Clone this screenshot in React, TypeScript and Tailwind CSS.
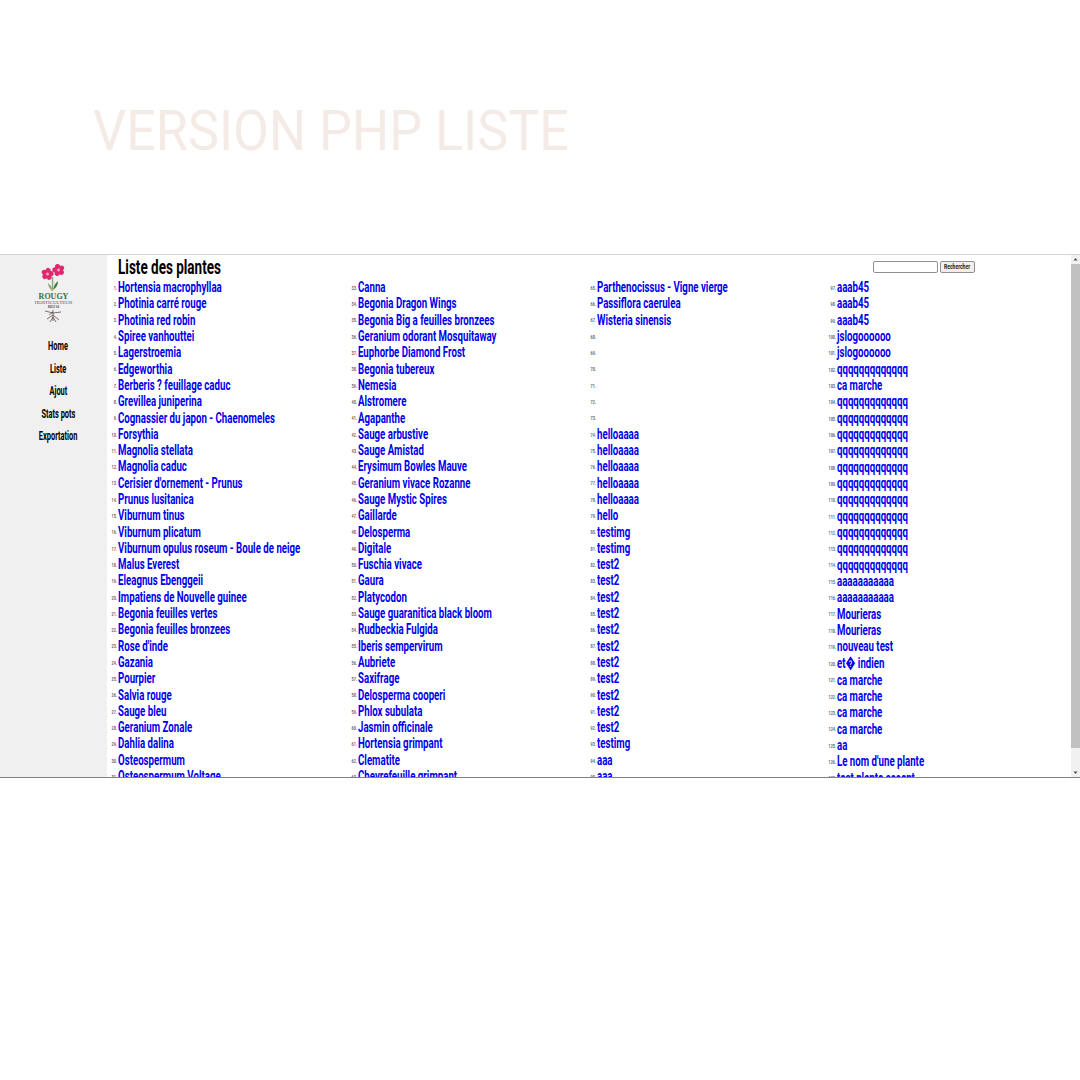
const c1 = ["Hortensia macrophyllaa","Photinia carré rouge","Photinia red robin","Spiree vanhouttei","Lagerstroemia","Edgeworthia","Berberis ? feuillage caduc","Grevillea juniperina","Cognassier du japon - Chaenomeles","Forsythia","Magnolia stellata","Magnolia caduc","Cerisier d'ornement - Prunus","Prunus lusitanica","Viburnum tinus","Viburnum plicatum","Viburnum opulus roseum - Boule de neige","Malus Everest","Eleagnus Ebenggeii","Impatiens de Nouvelle guinee","Begonia feuilles vertes","Begonia feuilles bronzees","Rose d'inde","Gazania","Pourpier","Salvia rouge","Sauge bleu","Geranium Zonale","Dahlia dalina","Osteospermum","Osteospermum Voltage"];
const c2 = ["Canna","Begonia Dragon Wings","Begonia Big a feuilles bronzees","Geranium odorant Mosquitaway","Euphorbe Diamond Frost","Begonia tubereux","Nemesia","Alstromere","Agapanthe","Sauge arbustive","Sauge Amistad","Erysimum Bowles Mauve","Geranium vivace Rozanne","Sauge Mystic Spires","Gaillarde","Delosperma","Digitale","Fuschia vivace","Gaura","Platycodon","Sauge guaranitica black bloom","Rudbeckia Fulgida","Iberis sempervirum","Aubriete","Saxifrage","Delosperma cooperi","Phlox subulata","Jasmin officinale","Hortensia grimpant","Clematite","Chevrefeuille grimpant"];
const c3 = ["Parthenocissus - Vigne vierge","Passiflora caerulea","Wisteria sinensis","","","","","","","helloaaaa","helloaaaa","helloaaaa","helloaaaa","helloaaaa","hello","testimg","testimg","test2","test2","test2","test2","test2","test2","test2","test2","test2","test2","test2","testimg","aaa","aaa"];
const q = "qqqqqqqqqqqqq";
const c4 = ["aaab45","aaab45","aaab45","jslogoooooo","jslogoooooo",q,"ca marche",q,q,q,q,q,q,q,q,q,q,q,"aaaaaaaaaaa","aaaaaaaaaaa","Mourieras","Mourieras","nouveau test","et\uFFFD indien","ca marche","ca marche","ca marche","ca marche","aa","Le nom d'une plante","test plante accent"];
const cols: [string[], number, string][] = [[c1,1,"h-[16.3px]"],[c2,33,"h-[16.3px]"],[c3,65,"h-[16.3px]"],[c4,97,"h-[16.33px]"]];
const nav = ["Home","Liste","Ajout","Stats pots","Exportation"];

function Flower({ x, y, r }: { x: number; y: number; r: number }) {
  return (
    <g transform={`translate(${x} ${y}) rotate(${r})`}>
      {[0, 72, 144, 216, 288].map((a) => (
        <ellipse key={a} cx="0" cy="-3.2" rx="2.6" ry="3" fill="#e2266f" transform={`rotate(${a})`} />
      ))}
      <circle r="1.5" fill="#f7a3b8" />
    </g>
  );
}

function Logo() {
  return (
    <svg width="44" height="60" viewBox="0 0 44 60" className="block">
      <path d="M20.5 14 Q21 21 20 28" stroke="#8aa878" strokeWidth="1.4" fill="none" />
      <path d="M21 27 Q22 21 26 18 Q26 24 21 27 Z" fill="#3f7d3a" />
      <path d="M19.5 27 Q16 24 16 20 Q19 22 20 26 Z" fill="#8aa878" />
      <Flower x={15.5} y={11} r={10} />
      <Flower x={26.5} y={7} r={-15} />
      <text x="21.5" y="36" textAnchor="middle" fontFamily="Liberation Serif, serif" fontWeight="700" fontSize="8" fill="#3d6b35">ROUGY</text>
      <text x="21.5" y="41" textAnchor="middle" fontFamily="Liberation Serif, serif" fontSize="5" fill="#555">HORTICULTEUR</text>
      <text x="21.5" y="45" textAnchor="middle" fontFamily="Liberation Serif, serif" fontWeight="700" fontSize="3" fill="#444">RIEZ 04</text>
      <path d="M21 47 V58 M21 50 L13 48 M21 50 L29 49 M21 52 L15 56 M21 52 L27 57 M21 49 L17 52 M21 54 L18 59 M21 54 L24 59" stroke="#4a3a30" strokeWidth="0.7" fill="none" />
    </svg>
  );
}

export default function App() {
  return (
    <div className="w-[1080px] h-[1080px] bg-white overflow-hidden antialiased font-['Roboto',sans-serif]">
      <div className="h-[254px] pl-[93px] pt-[99px]">
        <h1 className="text-[55px] leading-[64px] font-normal text-[#f4ebe6] whitespace-nowrap inline-block origin-left scale-x-[0.948]">VERSION PHP LISTE</h1>
      </div>
      <div className="flex h-[524px] border-t border-t-[#d4d4d4] border-b border-b-[#808080]">
        <aside className="w-[107px] shrink-0 bg-[#f0f0f0] flex flex-col items-center">
          <div className="w-[107px] pt-[8px] flex justify-center"><Logo /></div>
          <nav className="flex flex-col items-center gap-[6.5px] pt-[15px] pl-[9px]">
            {nav.map((n) => <a key={n} className="block h-[16px] leading-[16px] text-[12px] font-bold text-black whitespace-nowrap scale-x-[0.62]">{n}</a>)}
          </nav>
        </aside>
        <main className="flex-1 min-w-0 overflow-hidden">
          <div className="flex items-center justify-between h-[24px] pl-[11px] pr-[96px]">
            <h2 className="text-[20px] leading-[24px] font-bold text-black whitespace-nowrap origin-left scale-x-[0.675]">Liste des plantes</h2>
            <form className="flex items-center gap-[2px]">
              <input className="w-[65px] h-[12px] bg-white border border-[#8f8f8f] rounded-[2px]" />
              <button type="button" className="w-[35px] h-[12px] bg-[#efefef] border border-[#8f8f8f] rounded-[2px] leading-[10px] text-[#222] overflow-hidden flex justify-center">
                <span className="text-[7px] font-bold whitespace-nowrap scale-x-[0.72]">Rechercher</span>
              </button>
            </form>
          </div>
          <div className="flex">
            {cols.map(([items, start, rowH], ci) => (
              <ol key={ci} className="w-[239.7px] shrink-0">
                {items.map((t, i) => (
                  <li key={i} className={`flex items-center ${t.includes("\uFFFD") ? "h-[17px]" : rowH}`}>
                    <span className="w-[10px] mr-[1px] shrink-0 text-right text-[5px] font-bold text-[#666] pt-[3px] whitespace-nowrap origin-right scale-x-[0.75]">{start + i}.</span>
                    <a className="text-[15px] leading-[16px] font-bold text-[#0000ee] whitespace-nowrap inline-block origin-left scale-x-[0.645]">{t}</a>
                  </li>
                ))}
              </ol>
            ))}
          </div>
        </main>
        <div className="w-[9px] shrink-0 bg-[#f1f1f1] flex flex-col items-center">
          <svg width="9" height="9" viewBox="0 0 9 9" className="shrink-0"><path d="M2.5 5.5 L4.5 3 L6.5 5.5 Z" fill="#505050" /></svg>
          <div className="w-[9px] h-[484px] bg-[#c1c1c1]" />
          <div className="flex-1" />
          <svg width="9" height="9" viewBox="0 0 9 9" className="shrink-0"><path d="M2.5 3.5 L4.5 6 L6.5 3.5 Z" fill="#505050" /></svg>
        </div>
      </div>
    </div>
  );
}
